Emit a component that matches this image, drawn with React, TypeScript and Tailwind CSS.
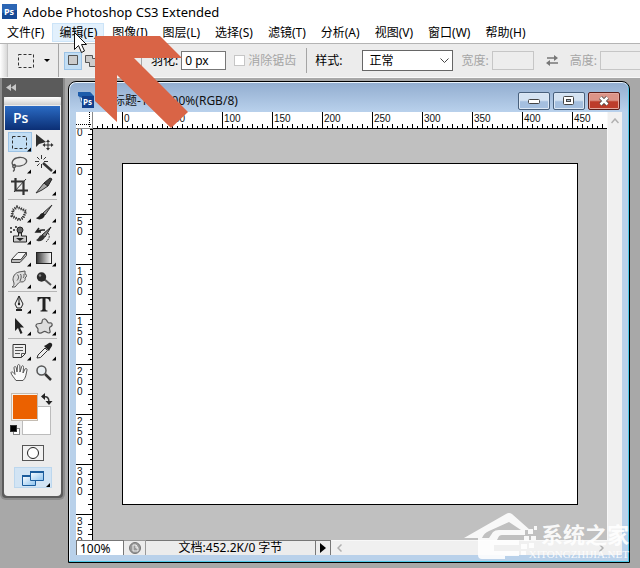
import type { ReactNode } from "react";

const menus = [
  "文件(F)", "编辑(E)", "图像(I)", "图层(L)", "选择(S)",
  "滤镜(T)", "分析(A)", "视图(V)", "窗口(W)", "帮助(H)",
];

type Tool = { name: string; more?: boolean; active?: boolean; art: ReactNode };

const ink = "#2e2e2e";

const toolGroups: Tool[][] = [
  [
    {
      name: "矩形选框", more: true, active: true,
      art: <rect x="2.5" y="3.5" width="14" height="12" fill="none" stroke={ink} strokeDasharray="3 2" />,
    },
    {
      name: "移动",
      art: (
        <>
          <path d="M1 1v13l3-3 7-2z" fill={ink} />
          <path d="M13 6.500l2 2.500h-1.500v2.500h2.500v-1.500l2.500 2-2.500 2v-1.500h-2.500v2.500h1.500l-2 2.500-2-2.500h1.500v-2.500h-2.500v1.500l-2.500-2 2.500-2v1.500h2.500v-2.500h-1.500z" fill={ink} />
        </>
      ),
    },
    {
      name: "套索", more: true,
      art: (
        <g fill="none" stroke="#555" strokeWidth="1.300">
          <path d="M4 11C0 8 3 3 9 2.500c6-.5 9 2.500 7 5.500-2 3-8 4-12 2.500" />
          <path d="M4 9.500c-2 1-1.500 3.500.5 3s1-3.500-.5-3M4 12.500c1 2 .5 3-1 4" />
        </g>
      ),
    },
    {
      name: "魔棒", more: true,
      art: (
        <g stroke="#333" fill="none">
          <path d="M8 8l9 8" strokeWidth="2.500" />
          <path d="M6.500 0v4M6.500 9v4M0 6.500h4M9 6.500h4M2 2l2.500 2.500M11 2L8.500 4.500M2 11l2.500-2.500" />
        </g>
      ),
    },
    {
      name: "裁剪",
      art: (
        <g stroke="#333" fill="none">
          <path d="M5.500 1v12.500H18M1 4.500h12.500V18" strokeWidth="2.200" />
          <path d="M4 15L16 2" />
        </g>
      ),
    },
    {
      name: "切片", more: true,
      art: (
        <>
          <path d="M1 16L9 6l4 3-6 4z" fill="#aaa" stroke="#333" />
          <path d="M9 6l6-5 2 1-4 7z" fill="#444" stroke="#222" />
        </>
      ),
    },
  ],
  [
    {
      name: "污点修复", more: true,
      art: (
        <g fill="#eee">
          <path d="M3 6l4-3 9 4-3 7-4 2-7-4z" stroke="#777" strokeWidth="1" />
          <path d="M3 6l4-3 9 4-3 7-4 2-7-4z" fill="none" stroke="#333" strokeWidth="3" strokeDasharray="1 1.300" />
        </g>
      ),
    },
    {
      name: "画笔", more: true,
      art: (
        <>
          <path d="M17 1L8 9l2 2z" fill="#999" stroke="#333" />
          <path d="M8 9c-3-.5-3 4-7 5 3 3 8 1 9-3z" fill="#222" />
        </>
      ),
    },
    {
      name: "仿制图章", more: true,
      art: (
        <>
          <path d="M0 1h2v2H0zM3 3h2v2H3zM0 5h2v2H0zM5 0h2v2H5z" fill="#555" />
          <circle cx="10" cy="4" r="3" fill="#666" stroke="#222" />
          <path d="M8.500 7h3v3h5v6h-13v-6h5z" fill="#ccc" stroke="#222" />
          <path d="M6 12h8l-4 3z" fill="#222" />
        </>
      ),
    },
    {
      name: "历史记录画笔", more: true,
      art: (
        <>
          <path d="M16 1L7 9l3 2z" fill="#888" stroke="#222" />
          <path d="M7 9c-3 0-3 4-6 5 3 3 8 0 9-3z" fill="#333" />
          <path d="M2 6c3-3 5-2 8-2M4 2L1 6h5" fill="none" stroke="#222" strokeWidth="1.500" />
          <path d="M13 7c3 4 0 7-2 9" fill="none" stroke="#333" strokeDasharray="2 1" />
        </>
      ),
    },
    {
      name: "橡皮擦", more: true,
      art: (
        <>
          <path d="M1.500 11.500L8 4.500h8.500l-5.500 7z" fill="#f5f5f5" stroke="#444" />
          <path d="M1.500 11.500v3H10l6.500-7v-3l-5.500 7z" fill="#bbb" stroke="#444" />
        </>
      ),
    },
    {
      name: "渐变", more: true,
      art: (
        <>
          <defs>
            <linearGradient id="ramp"><stop stopColor="#333" /><stop offset="1" stopColor="#fff" /></linearGradient>
          </defs>
          <rect x="1.500" y="4.500" width="15" height="11" fill="url(#ramp)" stroke="#222" />
        </>
      ),
    },
    {
      name: "涂抹", more: true,
      art: (
        <>
          <path d="M2 17c3-2 2-4 1-7 0-4 2-7 6-8l6-1v3c2 0 2 3 0 4 1 2-1 4-3 4-3-1-4 2-7 5z" fill="#ddd" stroke="#555" />
          <path d="M7 4.500c2 1 2 4 0 6M10.500 4c1 2 1 4-.5 7M14 4c0 2 0 3-1 4" fill="none" stroke="#555" />
        </>
      ),
    },
    {
      name: "加深", more: true,
      art: (
        <>
          <path d="M9 9l7 6" stroke="#555" strokeWidth="2" />
          <circle cx="6.500" cy="7" r="4.700" fill="#2b2b2b" />
          <circle cx="5" cy="5.500" r="1.200" fill="#888" />
        </>
      ),
    },
  ],
  [
    {
      name: "钢笔", more: true,
      art: (
        <>
          <path d="M9 1L5 9l2 4h4l2-4z" fill="#eee" stroke="#222" />
          <path d="M9 1v8" stroke="#222" />
          <circle cx="9" cy="9" r="1.200" fill="#222" />
          <path d="M6 14h6v2H6z" fill="#222" />
        </>
      ),
    },
    {
      name: "横排文字", more: true,
      art: <path d="M2.500 2h13v4.500h-1q-.5-3-3-3h-1V14q0 1.500 2 1.500v1h-7v-1q2 0 2-1.500V3.500h-1q-2.500 0-3 3h-1z" fill="#222" />,
    },
    {
      name: "路径选择", more: true,
      art: <path d="M5 1v13l3-3 2.500 6 2-1-2.500-5.500h4z" fill="#222" />,
    },
    {
      name: "自定形状", more: true,
      art: <path d="M9 2c3-1 3 4 5 4 4-1 4 3 1 4-2 2 2 5-1 6-3 0-3-3-6-1-3 2-6 1-5-2 1-2-3-3-2-5 1-3 6 0 6-3 0-2 1-3 2-3z" fill="#ddd" stroke="#555" strokeWidth="1.200" />,
    },
  ],
  [
    {
      name: "注释", more: true,
      art: (
        <>
          <path d="M3 2.500h12.500v9l-4 4H3z" fill="#eee" stroke="#333" />
          <path d="M5 5.500h8M5 8.500h8M5 11.500h5M11.500 15.500v-4h4" fill="none" stroke="#555" />
        </>
      ),
    },
    {
      name: "吸管", more: true,
      art: (
        <>
          <path d="M2 16l1-3 7-7 2.500 2.500-7 7z" fill="#eee" stroke="#333" />
          <path d="M9 4l5 5 1-2 2-3c1-2-1-4-3-3l-3 2z" fill="#222" />
        </>
      ),
    },
    {
      name: "抓手",
      art: (
        <path d="M6 16.500c-2-3-5-6-5-8 1-1.500 2.500 0 4 2L4 4c0-2 2-2 2.300 0L7 8l.5-6c.2-2 2.200-2 2.300 0L10 8l1.500-5c.5-2 2.300-1.500 2 .5L13 9l2-4c1-1 2.300-.5 2 1-1 4-1 8-4 10.500z" fill="#fafafa" stroke="#555" />
      ),
    },
    {
      name: "缩放",
      art: (
        <>
          <path d="M10 10l6 6" stroke="#333" strokeWidth="2.500" />
          <circle cx="6.500" cy="6.500" r="4.500" fill="#e8eef2" stroke="#555" strokeWidth="1.500" />
        </>
      ),
    },
  ],
];

function ToolButton({ tool }: { tool: Tool }) {
  return (
    <button
      aria-label={tool.name}
      className={`flex h-5 w-6 items-center justify-center ${tool.active ? "border border-[#9cc3e6] bg-[#c3def4]" : ""}`}
    >
      <svg width="24" height="20" viewBox="-2 -1 24 20" className="shrink-0">
        {tool.art}
        {tool.more && <path d="M21 14.500v4h-4z" fill="#000" />}
      </svg>
    </button>
  );
}

function Toolbox() {
  return (
    <aside className="flex w-[65px] shrink-0 flex-col rounded-b-md border-x-2 border-b-2 border-[#8c8c8c] bg-[#5b5b5b] px-0.5 pb-0.5">
      <button aria-label="折叠面板" className="flex h-[19px] items-center pl-0.5">
        <svg width="11" height="7" viewBox="0 0 11 7"><path d="M5 0v7L0 3.500zM10 0v7L5 3.500z" fill="#c8c8c8" /></svg>
      </button>
      <div className="flex flex-col rounded-b-sm bg-[#ececec]">
        <div className="h-2 rounded-t-sm bg-gradient-to-b from-white to-[#cfcfcf]" />
        <div className="mx-px mt-px flex h-6 items-center bg-gradient-to-b from-[#2b6bc4] to-[#0c2f75] pl-2 font-['Open_Sans',sans-serif] text-sm font-semibold text-white">
          Ps
        </div>
        <div className="flex flex-col px-1 pt-0.5">
          {toolGroups.map((group, i) => (
            <div key={i}>
              {i > 0 && <hr className={`border-t border-[#b5b5b5] ${i === 1 ? "my-[3px]" : "my-0.5"}`} />}
              <div className="grid grid-cols-2 gap-x-px gap-y-0.5">
                {group.map((tool) => <ToolButton key={tool.name} tool={tool} />)}
              </div>
            </div>
          ))}
        </div>
        <svg width="57" height="50" viewBox="0 0 57 50" className="mt-2" role="img" aria-label="前景色和背景色">
          <rect x="18.500" y="15.500" width="28" height="28" fill="#fff" stroke="#bcbcbc" />
          <rect x="7.500" y="2.500" width="26" height="27" fill="#f6f1ea" stroke="#c4bcb2" />
          <rect x="9" y="4" width="24" height="24" fill="#eb6100" />
          <path d="M40 6c3-1 5 1 5 5" fill="none" stroke="#333" strokeWidth="1.500" />
          <path d="M41 2v7l-4-3.500zM41.500 10h7L45 14z" fill="#222" />
          <rect x="9.500" y="37.500" width="6" height="6" fill="#fff" stroke="#888" />
          <rect x="6.500" y="34.500" width="6" height="6" fill="#000" stroke="#333" />
        </svg>
        <button aria-label="以快速蒙版模式编辑" className="mx-auto mt-1 flex h-4 w-[22px] items-center justify-center border border-[#555] bg-[#f2f2f2]">
          <svg width="14" height="14" viewBox="0 0 14 14"><circle cx="7" cy="7" r="5.500" fill="#fff" stroke="#222" /></svg>
        </button>
        <button aria-label="更改屏幕模式" className="mx-auto mt-1.5 mb-2 flex h-[21px] w-[38px] items-center justify-center border border-[#bcd7ee] bg-[#d2e4f4]">
          <svg width="36" height="20" viewBox="0 0 36 20">
            <defs>
              <linearGradient id="pane" x2="1" y2="1"><stop stopColor="#fff" /><stop offset="1" stopColor="#8cc2ee" /></linearGradient>
            </defs>
            <path d="M7.500 7.500h13v10h-13z" fill="url(#pane)" stroke="#1b5c9c" />
            <path d="M7 7h14v2H7z" fill="#1b5c9c" />
            <path d="M15.500 3.500h13v9h-13z" fill="url(#pane)" stroke="#1b5c9c" />
            <path d="M15 3h14v2H15z" fill="#1b5c9c" />
            <path d="M35 15v4h-4z" fill="#000" />
          </svg>
        </button>
      </div>
    </aside>
  );
}

const hTicks = Array.from({ length: 103 }, (_, i) => i * 5 - 30);
const vTicks = Array.from({ length: 82 }, (_, i) => i * 5 - 35);

function HorizontalRuler() {
  return (
    <svg height="17" className="w-full min-w-0 flex-1" fontFamily="'Liberation Sans', sans-serif" fontSize="10">
      {hTicks.map((v) => {
        const x = v + 29;
        const len = v % 50 === 0 ? 17 : v % 10 === 0 ? 5 : 3;
        return <rect key={v} x={x} y={17 - len} width="1" height={len} fill="#000" />;
      })}
      {hTicks.filter((v) => v >= 0 && v % 50 === 0).map((v) => (
        <text key={v} x={v + 31} y="10" fill="#111">{v}</text>
      ))}
      <rect y="16" width="100%" height="1" fill="#000" />
    </svg>
  );
}

function VerticalRuler() {
  return (
    <svg width="17" height="411" className="shrink-0 bg-white" fontFamily="'Liberation Sans', sans-serif" fontSize="10">
      {vTicks.map((v) => {
        const y = v + 35;
        const len = v % 50 === 0 ? 17 : v % 10 === 0 ? 5 : 3;
        return <rect key={v} x={17 - len} y={y} width={len} height="1" fill="#000" />;
      })}
      <text x="1" y="7" fill="#111">0</text>
      {vTicks.filter((v) => v >= 0 && v % 50 === 0).map((v) =>
        String(v).split("").map((d, i) => (
          <text key={`${v}-${i}`} x="1" y={v + 46 + i * 10} fill="#111">{d}</text>
        )),
      )}
      <rect x="16" width="1" height="411" fill="#000" />
    </svg>
  );
}

function DocumentWindow() {
  return (
    <section className="relative mt-[3px] mr-2.5 mb-[5px] ml-[3px] flex min-w-0 flex-1 flex-col rounded-t-lg border border-black bg-[#b9d1ea] px-[7px] pb-[7px] shadow-[inset_-1px_-1px_0_#4ec8e8,inset_1px_1px_0_#e8f2fb]">
      <header className="-mx-1.5 mt-px flex h-[29px] items-center rounded-t-md bg-gradient-to-b from-[#93aed0] to-[#b9d1ec] pr-2 pl-2">
        <svg width="17" height="17" viewBox="0 0 17 17" className="mt-1 mr-1.5 shrink-0">
          <path d="M1 2h12v9H3z" fill="#dbe9f7" stroke="#5f86b5" />
          <path d="M0 1h12l4 4v2H4L0 5z" fill="#1d5cab" />
          <rect x="4" y="5" width="12" height="12" fill="#123f8c" />
          <text x="5" y="14" fontFamily="'Noto Sans', sans-serif" fontSize="8" fontWeight="700" fill="#fff">Ps</text>
        </svg>
        <h1 className="mt-1.5 flex-1 truncate text-xs text-[#111]">未标题-1 @ 100%(RGB/8)</h1>
        <div className="mt-1.5 flex gap-[3px]">
          <button aria-label="最小化" className="flex h-[18px] w-8 items-center justify-center rounded-xs border border-[#48607c] bg-gradient-to-b from-[#d5e3f2] from-45% to-[#a4bfdf] to-55% shadow-[inset_0_0_0_1px_#dce8f5]">
            <svg width="12" height="6" viewBox="0 0 12 6"><rect x=".5" y="1.500" width="11" height="4" rx="1" fill="#fff" stroke="#444" /></svg>
          </button>
          <button aria-label="还原" className="flex h-[18px] w-8 items-center justify-center rounded-xs border border-[#48607c] bg-gradient-to-b from-[#d5e3f2] from-45% to-[#a4bfdf] to-55% shadow-[inset_0_0_0_1px_#dce8f5]">
            <svg width="12" height="10" viewBox="0 0 12 10"><rect x=".5" y=".5" width="10" height="8" rx="1" fill="#fff" stroke="#444" /><rect x="3.500" y="3.500" width="4" height="2" fill="#abc" stroke="#444" /></svg>
          </button>
          <button aria-label="关闭" className="flex h-[18px] w-8 items-center justify-center rounded-xs border border-[#5a1e1a] bg-gradient-to-b from-[#dc9488] from-45% to-[#bd3c2b] to-55% shadow-[inset_0_0_0_1px_#e5a79d]">
            <svg width="12" height="10" viewBox="0 0 12 10"><path d="M2.500 1.500l7 7M9.500 1.500l-7 7" stroke="#444" strokeWidth="4" /><path d="M2.500 1.500l7 7M9.500 1.500l-7 7" stroke="#fff" strokeWidth="2.500" /></svg>
          </button>
        </div>
      </header>
      <div className="flex flex-1">
        <div className="flex min-w-0 flex-1 flex-col">
          <div className="flex bg-white">
            <svg width="17" height="17" viewBox="0 0 17 17" className="shrink-0">
              <path d="M13.500 0v17M0 12.500h17" stroke="#000" strokeDasharray="1 1" />
              <path d="M16.500 0v17M0 16.500h17" stroke="#888" />
            </svg>
            <HorizontalRuler />
          </div>
          <div className="flex flex-1">
            <VerticalRuler />
            <div className="flex-1 overflow-hidden bg-[#c0c0c0] pt-[34px] pl-[29px]">
              <div className="h-[342px] w-[456px] border border-black bg-white" />
            </div>
          </div>
        </div>
        <div className="flex w-[15px] flex-col items-center border-l border-[#f8f8f8] bg-[#f0f0f0] pt-1.5">
          <svg width="8" height="6" viewBox="0 0 8 6"><path d="M.5 5L4 1l3.500 4" fill="none" stroke="#b0b0b0" strokeWidth="1.500" /></svg>
        </div>
      </div>
      <footer className="flex h-[15px] items-stretch bg-[#ececec] text-xs">
        <input aria-label="显示比例" defaultValue="100%" className="w-12 border border-b-0 border-[#777] bg-white pl-[3px] leading-3" />
        <div className="flex w-[22px] items-center justify-center border-t border-r border-[#999]">
          <svg width="12" height="12" viewBox="0 0 12 12"><circle cx="6" cy="6" r="5.500" fill="#999" stroke="#777" /><path d="M4 9V3h3l2 3v3zM7 3v3h2" fill="none" stroke="#eee" /></svg>
        </div>
        <div className="flex w-[170px] items-center justify-center border-t border-r border-[#777] text-black">
          <span className="whitespace-nowrap">文档:452.2K/0 字节</span>
        </div>
        <button aria-label="状态栏选项" className="flex w-[15px] items-center justify-center border-t border-r border-[#777]">
          <svg width="6" height="10" viewBox="0 0 6 10"><path d="M0 0l6 5-6 5z" fill="#000" /></svg>
        </button>
        <div className="flex flex-1 items-center justify-between border-t border-[#f8f8f8] bg-[#f0f0f0] pr-[18px] pl-1.5">
          <svg width="5" height="8" viewBox="0 0 5 8"><path d="M4.500.5L1 4l3.500 3.500" fill="none" stroke="#b0b0b0" strokeWidth="1.500" /></svg>
          <svg width="5" height="8" viewBox="0 0 5 8"><path d="M.5.5L4 4 .5 7.500" fill="none" stroke="#b0b0b0" strokeWidth="1.500" /></svg>
        </div>
      </footer>
      <Watermark />
    </section>
  );
}

function Watermark() {
  return (
    <div className="absolute right-0 bottom-0.5 flex items-end text-white opacity-90">
      <svg width="74" height="48" viewBox="0 0 74 48" fill="#fff">
        <path d="M1 26L43 2q3-2 6 0l18 16h-9L46 10 26 19q-5 2-7 7z" />
        <path d="M15 26h12v14q0 3 4 3h11v4H19q-4 0-4-4z" />
        <path d="M30 20q2-2 6-2h26v5H39q-3 0-4 3l-1 2h22v5H31v6h25v5H26V26z" />
        <path d="M65 17h5v5h-5zM71 14h3v4h-3zM61 24h5v5h-5zM68 24h5v4h-5zM58 32h6v5h-6zM66 31h5v5h-5zM58 39h5v4h-5z" />
      </svg>
      <div className="-ml-2 flex flex-col items-end">
        <span className="text-[22px] leading-7 font-bold">系统之家</span>
        <span className="font-['Liberation_Serif',serif] text-[11px] leading-3">XITONGZHIJIA.NET</span>
      </div>
    </div>
  );
}

function OptionsBar() {
  return (
    <div className="flex h-[35px] items-center overflow-hidden border-t border-b border-t-[#b4b4b4] border-b-[#f8f8f8] bg-[#ececec] text-xs whitespace-nowrap">
      <div className="h-full w-2 shrink-0 border-r border-[#c4c4c4] bg-gradient-to-r from-white to-[#d8d8d8]" />
      <button aria-label="工具预设" className="flex h-full w-[51px] shrink-0 items-center gap-2.5 border-r border-[#a5a5a5] pl-2.5">
        <svg width="16" height="14" viewBox="0 0 16 14"><rect x=".5" y=".5" width="15" height="13" fill="none" stroke="#333" strokeDasharray="3 2" /></svg>
        <svg width="6" height="3" viewBox="0 0 6 3"><path d="M0 0h6L3 3z" /></svg>
      </button>
      <div className="flex w-[83px] shrink-0 items-center border-r border-[#a5a5a5] pl-[5px]">
        <button aria-label="新选区" className="flex h-[18px] w-[18px] items-center justify-center border border-[#9cc3e6] bg-[#c3def4]">
          <svg width="11" height="11" viewBox="0 0 11 11"><path d="M.5.5h9v9h-9z" fill="#ccc" stroke="#555" /></svg>
        </button>
        <button aria-label="添加到选区" className="flex h-[18px] w-[18px] items-center justify-center">
          <svg width="13" height="12" viewBox="0 0 13 12"><path d="M.5.5h7v3h5v8h-8v-4h-4z" fill="#ccc" stroke="#555" /></svg>
        </button>
        <button aria-label="从选区减去" className="flex h-[18px] w-[18px] items-center justify-center">
          <svg width="13" height="12" viewBox="0 0 13 12"><path d="M.5.5h7v3h-3v4h-4z" fill="#ccc" stroke="#555" /></svg>
        </button>
        <button aria-label="与选区交叉" className="flex h-[18px] w-[18px] items-center justify-center">
          <svg width="13" height="12" viewBox="0 0 13 12"><path d="M4.500 3.500h4v4h-4z" fill="#ccc" stroke="#555" /></svg>
        </button>
      </div>
      <label htmlFor="feather" className="ml-[9px] shrink-0">羽化:</label>
      <input id="feather" defaultValue="0 px" className="ml-[3px] h-[19px] w-[45px] shrink-0 border border-[#777] bg-white px-[3px]" />
      <label className="ml-2 flex shrink-0 items-center gap-[3px] text-[#a5a5a5]">
        <input type="checkbox" disabled className="size-[11px] appearance-none border border-[#c6c6c6] bg-white" />
        消除锯齿
      </label>
      <div className="ml-2.5 h-[25px] w-px shrink-0 bg-[#a5a5a5]" />
      <label htmlFor="style" className="ml-2 shrink-0">样式:</label>
      <div className="relative ml-5 shrink-0">
        <select id="style" className="h-[21px] w-[91px] appearance-none border border-[#666] bg-white pl-1.5">
          <option>正常</option>
        </select>
        <svg width="9" height="6" viewBox="0 0 9 6" className="pointer-events-none absolute top-2 right-1"><path d="M.5.5l4 4 4-4" fill="none" stroke="#444" /></svg>
      </div>
      <label htmlFor="width" className="ml-2 shrink-0 text-[#a5a5a5]">宽度:</label>
      <input id="width" disabled className="ml-[3px] h-[19px] w-[42px] shrink-0 border border-[#c6c6c6] bg-[#ededed]" />
      <button aria-label="高度和宽度互换" className="ml-3 shrink-0">
        <svg width="12" height="11" viewBox="0 0 12 11"><path d="M1 3h7M4 8h8" stroke="#777" strokeWidth="1.500" /><path d="M8 0l4 3-4 3zM4 5v6L0 8z" fill="#777" /></svg>
      </button>
      <label htmlFor="height" className="ml-3 shrink-0 text-[#a5a5a5]">高度:</label>
      <input id="height" disabled className="ml-[3px] h-[19px] w-[42px] shrink-0 border border-[#c6c6c6] bg-[#ededed]" />
    </div>
  );
}

export default function App() {
  return (
    <div className="relative flex min-h-screen flex-col overflow-hidden bg-[#a8a8a8] font-['Noto_Sans','Noto_Sans_CJK_SC',sans-serif] text-black">
      <header className="flex h-[23px] items-center gap-1.5 bg-white pl-0.5">
        <svg width="15" height="15" viewBox="0 0 15 15">
          <rect width="15" height="15" fill="#164a96" />
          <path d="M0 0h15v6L0 9z" fill="#2c66b5" />
          <text x="2" y="11" fontFamily="'Noto Sans', sans-serif" fontSize="9" fontWeight="700" fill="#fff">Ps</text>
        </svg>
        <span className="text-[13px] leading-5">Adobe Photoshop CS3 Extended</span>
      </header>
      <nav className="flex h-5 gap-px bg-white text-xs">
        {menus.map((m, i) => (
          <button key={m} className={`h-[19px] px-[7px] whitespace-nowrap ${i === 1 ? "bg-[#e2f0fc] outline -outline-offset-1 outline-[#cce4f8]" : ""}`}>
            {m}
          </button>
        ))}
      </nav>
      <OptionsBar />
      <main className="flex flex-1 items-start">
        <Toolbox />
        <DocumentWindow />
      </main>
      <svg width="120" height="100" viewBox="70 30 120 100" className="pointer-events-none absolute top-[30px] left-[70px]">
        <path d="M95 36h65l22 22h-48l54 54-17 16-54-53v47l-22-21z" fill="#d96446" />
        <path d="M74.500 32.500v17l4-4 3 7 3-1.500-3-6.500h5z" fill="#fff" stroke="#111" />
      </svg>
    </div>
  );
}
